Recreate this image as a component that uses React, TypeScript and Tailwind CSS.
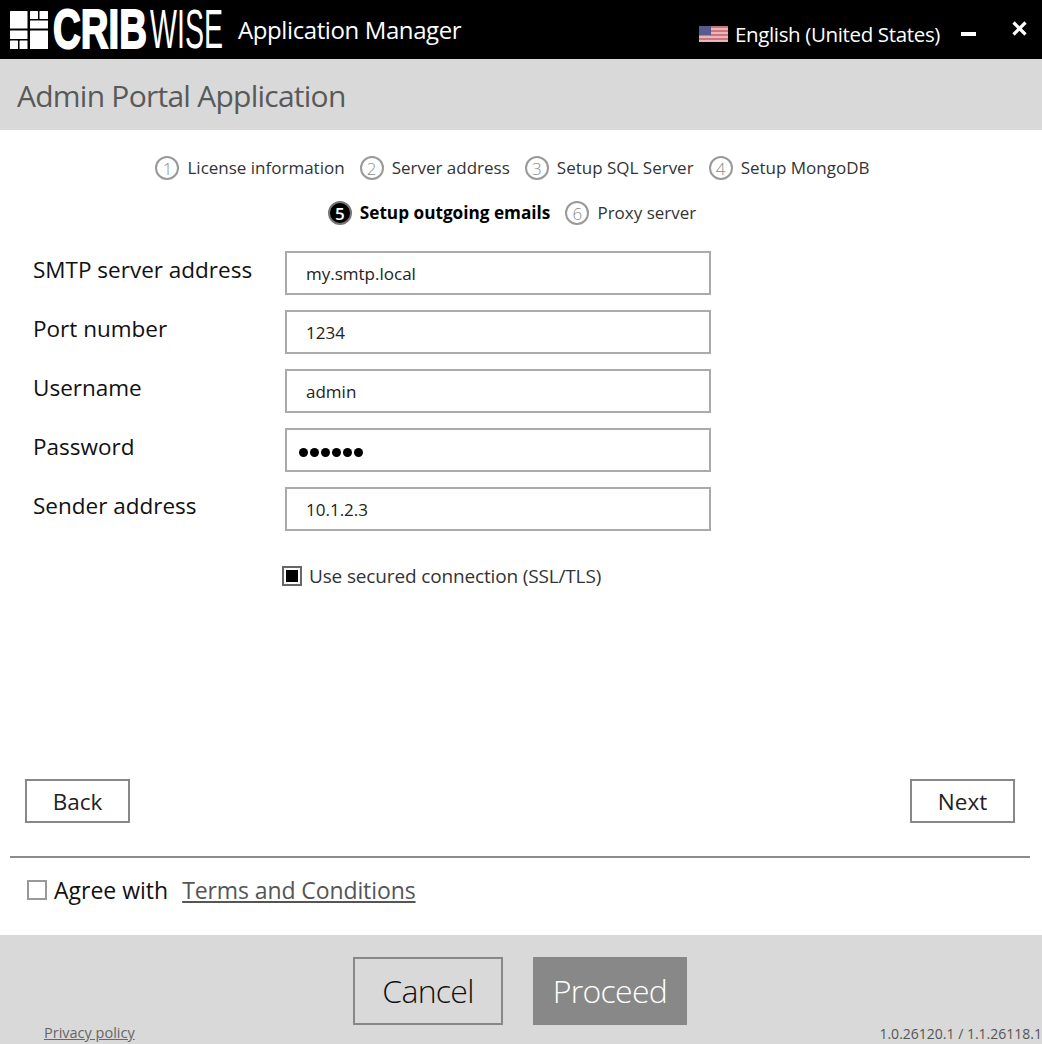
import type { ReactNode } from "react";

const font = "font-['Open_Sans','Noto_Sans',sans-serif]";

function LogoMark() {
  return (
    <svg width="38" height="38" viewBox="0 0 38 38" className="shrink-0" fill="#fff">
      <rect x="0" y="0" width="17.5" height="17.5" rx="0.5" />
      <rect x="20" y="0" width="8" height="8" rx="0.5" />
      <rect x="29.5" y="0" width="8.5" height="8" rx="0.5" />
      <rect x="20" y="9.5" width="18" height="8" rx="0.5" />
      <rect x="0" y="19.5" width="17.5" height="8.5" rx="0.5" />
      <rect x="0" y="29.5" width="8" height="8.5" rx="0.5" />
      <rect x="9.5" y="29.5" width="8" height="8.5" rx="0.5" />
      <rect x="20" y="19.5" width="18" height="18.5" rx="0.5" />
    </svg>
  );
}

// squeezed real text, there is no condensed face among the installed fonts
function Wordmark() {
  return (
    <div className="mb-[2px] ml-[5px] flex w-[172px] shrink-0 font-['Liberation_Sans',sans-serif] text-[56px] leading-none">
      <span className="w-[97px] origin-left scale-x-[0.686] whitespace-nowrap font-bold [-webkit-text-stroke:2px_white]">
        CRIB
      </span>
      <span className="w-[74px] origin-left scale-x-[0.51] whitespace-nowrap">WISE</span>
    </div>
  );
}

function UsFlag() {
  return (
    <svg width="29" height="16" viewBox="0 0 29 16" className="mt-[9px] shrink-0">
      <rect width="29" height="16" fill="#e9b7bb" />
      <rect y="0" width="29" height="2" fill="#d0747c" />
      <rect y="4" width="29" height="2" fill="#d0747c" />
      <rect y="8" width="29" height="2" fill="#d0747c" />
      <rect y="12" width="29" height="2" fill="#d0747c" />
      <rect width="12" height="9" fill="#565a8c" />
    </svg>
  );
}

function StepBadge({ n, active }: { n: number; active?: boolean }) {
  return (
    <span
      className={`flex h-[24px] w-[24px] shrink-0 items-center justify-center rounded-full border-2 text-[17px] leading-none ${
        active ? "border-[#777] bg-black font-semibold text-white" : "border-[#999] font-light text-[#8c8c8c]"
      }`}
    >
      {n}
    </span>
  );
}

function Step({ n, label, active }: { n: number; label: string; active?: boolean }) {
  return (
    <div className="flex items-center gap-[8px]">
      <StepBadge n={n} active={active} />
      <span className={`leading-[24px] ${active ? "text-[17.2px] font-bold text-black" : "text-[17px] text-[#333]"}`}>
        {label}
      </span>
    </div>
  );
}

function Field({ label, children }: { label: string; children: ReactNode }) {
  return (
    <div className="flex h-[44px] items-start">
      <label className="w-[285px] shrink-0 pl-[33px] text-[22.5px] leading-[38px] text-[#111]">{label}</label>
      <div className="flex h-[44px] w-[426px] items-center border-2 border-[#aaa] bg-white pl-[19px] pt-[2px] text-[17px] text-[#222]">
        {children}
      </div>
    </div>
  );
}

export default function App() {
  return (
    <div className={`flex h-[1044px] w-[1042px] flex-col overflow-hidden bg-white ${font}`}>
      <header className="flex h-[59px] shrink-0 items-center bg-black pl-[10px] pr-[15px] text-white">
        <LogoMark />
        <Wordmark />
        <span className="ml-[13px] text-[24px] leading-none tracking-[-0.4px]">Application Manager</span>
        <div className="ml-auto flex items-center">
          <UsFlag />
          <span className="ml-[7px] mt-[10px] text-[20.5px] leading-none tracking-[-0.35px]">
            English (United States)
          </span>
          <span className="ml-[21px] mt-[8px] h-[4px] w-[15px] bg-white" />
          <svg width="15" height="15" viewBox="0 0 15 15" className="ml-[36px] mb-[2px]">
            <path d="M1.5 1.5 L13.5 13.5 M13.5 1.5 L1.5 13.5" stroke="#fff" strokeWidth="3.2" />
          </svg>
        </div>
      </header>

      <div className="flex h-[71px] shrink-0 items-center bg-[#d9d9d9] pl-[17px] pt-[3px]">
        <h1 className="text-[30px] font-normal leading-none tracking-[-0.75px] text-[#595959]">
          Admin Portal Application
        </h1>
      </div>

      <main className="flex flex-1 flex-col">
        <div className="mt-[26px] flex justify-center gap-[15px] pr-[17px]">
          <Step n={1} label="License information" />
          <Step n={2} label="Server address" />
          <Step n={3} label="Setup SQL Server" />
          <Step n={4} label="Setup MongoDB" />
        </div>
        <div className="mt-[21px] flex justify-center gap-[15px] pr-[18px]">
          <Step n={5} label="Setup outgoing emails" active />
          <Step n={6} label="Proxy server" />
        </div>

        <form className="mt-[26px] flex flex-col gap-[15px]">
          <Field label="SMTP server address">my.smtp.local</Field>
          <Field label="Port number">1234</Field>
          <Field label="Username">admin</Field>
          <Field label="Password">
            <span className="ml-[-7px] mt-[2px] flex gap-[2px]">
              {[0, 1, 2, 3, 4, 5].map((i) => (
                <span key={i} className="h-[9px] w-[9px] rounded-full bg-black" />
              ))}
            </span>
          </Field>
          <Field label="Sender address">10.1.2.3</Field>
        </form>

        <div className="ml-[282px] mt-[33px] flex items-center gap-[7px]">
          <span className="flex h-[20px] w-[20px] items-center justify-center border-2 border-[#666] bg-white">
            <span className="h-[12px] w-[12px] bg-black" />
          </span>
          <span className="text-[19px] leading-[24px] tracking-[-0.15px] text-[#333]">
            Use secured connection (SSL/TLS)
          </span>
        </div>

        <div className="mt-[191px] flex justify-between pl-[25px] pr-[27px]">
          <button className="h-[44px] w-[105px] border-2 border-[#888] pt-[2px] text-[22.5px] text-[#222]">Back</button>
          <button className="h-[44px] w-[105px] border-2 border-[#888] pt-[2px] text-[22.5px] text-[#222]">Next</button>
        </div>

        <div className="ml-[10px] mr-[12px] mt-[33px] h-[2px] bg-[#8c8c8c]" />

        <div className="ml-[27px] mt-[17px] flex items-center">
          <span className="h-[20px] w-[20px] border-2 border-[#999] bg-white" />
          <span className="ml-[7px] text-[23px] leading-[30px] text-[#111]">Agree with</span>
          <a className="ml-[14px] text-[23px] leading-[30px] tracking-[-0.1px] text-[#555] underline underline-offset-2">
            Terms and Conditions
          </a>
        </div>
      </main>

      <footer className="relative flex h-[109px] shrink-0 justify-center gap-[30px] bg-[#d9d9d9] pr-[2px] pt-[22px]">
        <button className="h-[68px] w-[150px] border-2 border-[#888] text-[32px] font-light tracking-[-0.7px] text-[#111]">
          Cancel
        </button>
        <button className="h-[68px] w-[154px] bg-[#888] text-[32px] font-light tracking-[-0.7px] text-white">
          Proceed
        </button>
        <a className="absolute bottom-[1px] left-[44px] text-[14.5px] leading-[20px] text-[#666] underline">
          Privacy policy
        </a>
        <span className="absolute bottom-0 right-0 text-[14px] leading-[20px] text-[#555]">
          1.0.26120.1 / 1.1.26118.1
        </span>
      </footer>
    </div>
  );
}
